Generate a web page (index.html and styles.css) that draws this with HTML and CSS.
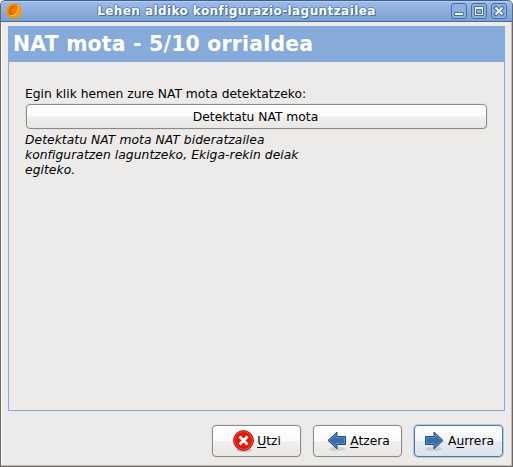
FILE: index.html
```html
<!DOCTYPE html>
<html lang="eu">
<head>
<meta charset="utf-8">
<title>Lehen aldiko konfigurazio-laguntzailea</title>
<link rel="stylesheet" href="styles.css">
</head>
<body>
<div class="window">
  <header class="titlebar">
    <svg class="logo" width="16" height="16" viewBox="0 0 16 16">
      <defs><linearGradient id="lg" x2="1" y2="1"><stop stop-color="#fb9a12"/><stop offset=".5" stop-color="#f08a0a"/><stop offset="1" stop-color="#f5a51c"/></linearGradient></defs>
      <circle cx="8" cy="8" r="7.800" fill="url(#lg)"/>
      <ellipse cx="7.200" cy="7.600" rx="4.600" ry="5.600" fill="#dd6404" transform="rotate(25 7 8)"/>
      <ellipse cx="8" cy="6.800" rx="3" ry="4.200" fill="#ea7c08" transform="rotate(25 7 8)"/>
      <path d="M3.500 12.500Q9 14 11.500 8.500T11 2.500" fill="none" stroke="#fbc02a" stroke-width="1.200"/>
    </svg>
    <h1 class="title"><span>Lehen aldiko konfigurazio-laguntzailea</span></h1>
    <div class="controls">
      <svg width="16" height="16" viewBox="0 0 16 16"><rect class="ctl" x=".5" y=".5" width="15" height="15" rx="2.500"/><path d="M3.500 9.500h9v3h-9z" fill="#fff" stroke="#456f9f"/></svg>
      <svg width="16" height="16" viewBox="0 0 16 16"><rect class="ctl" x=".5" y=".5" width="15" height="15" rx="2.500"/><path d="M3.500 3.500h9v9h-9z" fill="#eef4fb" stroke="#456f9f"/><path d="M5.500 6.500h5v4h-5z" fill="#8fb0dc" stroke="#456f9f"/></svg>
      <svg width="16" height="16" viewBox="0 0 16 16"><rect class="ctl" x=".5" y=".5" width="15" height="15" rx="2.500"/><path d="M5 5l6 6m0-6l-6 6" stroke="#456f9f" stroke-width="4" stroke-linecap="square"/><path d="M5.200 5.200l5.600 5.600m0-5.600l-5.600 5.600" stroke="#f4f8fd" stroke-width="2" stroke-linecap="square"/></svg>
    </div>
  </header>
  <main class="panel">
    <h2 class="heading">NAT mota - 5/10 orrialdea</h2>
    <div class="content">
      <p class="label">Egin klik hemen zure NAT mota detektatzeko:</p>
      <button class="button detect">Detektatu NAT mota</button>
      <p class="hint">Detektatu NAT mota NAT bideratzailea<br>konfiguratzen laguntzeko, Ekiga-rekin deiak<br>egiteko.</p>
    </div>
  </main>
  <footer class="actions">
    <button class="button">
      <svg width="24" height="24" viewBox="0 0 24 24"><ellipse cx="12" cy="21" rx="8" ry="2" fill="#000" opacity=".16"/><circle cx="11.500" cy="11.500" r="9.900" fill="#df1a0d" stroke="#b50f0b"/><circle cx="11.500" cy="11.500" r="8.900" fill="none" stroke="#f15a48" stroke-width=".8"/><path d="M7.500 7.500l8 8m0-8l-8 8" stroke="#fff" stroke-width="2.800"/></svg>
      <span><u>U</u>tzi</span>
    </button>
    <button class="button">
      <svg width="24" height="24" viewBox="0 0 24 24"><ellipse cx="12" cy="20" rx="8.500" ry="2" fill="#000" opacity=".1"/><path d="M3 11.500L12 3v4.500h8.500v8H12V20z" fill="#3a6cab" stroke="#204a87"/><path d="M4.500 11.500L11 5.300v3.200h8.500v6H11v3.200z" fill="none" stroke="#7299c8" stroke-width=".7"/></svg>
      <span><u>A</u>tzera</span>
    </button>
    <button class="button primary">
      <svg width="24" height="24" viewBox="0 0 24 24"><ellipse cx="11" cy="20" rx="8.500" ry="2" fill="#000" opacity=".1"/><path d="M20 11.500L11 3v4.500H2.500v8H11V20z" fill="#3a6cab" stroke="#204a87"/><path d="M18.500 11.500L12 5.300v3.200H3.500v6H12v3.200z" fill="none" stroke="#7299c8" stroke-width=".7"/></svg>
      <span>A<u>u</u>rrera</span>
    </button>
  </footer>
</div>
</body>
</html>
```

FILE: styles.css
```css
* { box-sizing: border-box; }
body { margin: 0; background: #fff; font: 12.3px/15px "DejaVu Sans", sans-serif; color: #000; }
h1, h2, p { margin: 0; }
.window { width: 513px; height: 467px; display: flex; flex-direction: column; background: #edebe9; border: 1px solid #6b6765; border-top: 0; border-radius: 5px 5px 0 0; overflow: hidden; box-shadow: inset -1px -1px #bdbab7, inset 1px 0 #fff; }
.titlebar { height: 22px; flex: none; margin: 0 -1px; padding: 0 6px; display: flex; align-items: center; background: linear-gradient(#9dbce8, #7ba0d0); border: 1px solid #456a9b; border-top-color: #3d5f8d; border-radius: 5px 5px 0 0; box-shadow: inset 0 1px #b6cdef; }
.logo { flex: none; margin-left: -1px; }
.title { flex: 1; text-align: center; font-size: 12px; line-height: 22px; letter-spacing: .42px; color: #fff; text-shadow: 1px 1px #486f9f, -1px 0 #587fb0, 0 -1px #6289ba, 1px 0 #587fb0; white-space: nowrap; }
.controls { display: flex; gap: 4px; margin-right: -1px; }
.ctl { fill: #8eb0df; stroke: #456f9f; }
.panel { height: 385px; flex: none; margin: 4px 7px 0; border: 1px solid #86aad9; }
.heading { height: 35px; padding-left: 4px; background: #86aad9; color: #fff; font-size: 20.4px; letter-spacing: .22px; line-height: 35px; white-space: nowrap; }
.content { padding: 25px 17px 0 16px; }
.label { height: 17px; line-height: 15px; white-space: nowrap; }
.button { width: 89px; height: 32px; padding: 0; display: flex; align-items: center; justify-content: center; gap: 1px; border: 1px solid #8d8985; border-radius: 4px; background: linear-gradient(#fff, #fafafa 49%, #f1f0ef 51%, #e8e7e5); color: #000; font: inherit; box-shadow: 0 0 0 1px #e4e2df; }
.detect { width: 461px; height: 25px; margin-left: 1px; padding: 2px 2px 0 0; }
.hint { margin-top: 4px; font-style: italic; letter-spacing: .06px; white-space: nowrap; }
.actions { display: flex; justify-content: flex-end; gap: 12px; padding: 14px 9px 0; }
.primary { border-color: #5278ab; background: linear-gradient(#fff, #f3f5f8 49%, #e7ebf0 51%, #dde2e9); box-shadow: 0 0 0 1px #b3c8e3; }
u { text-underline-offset: 2px; text-decoration-thickness: 1px; text-decoration-skip-ink: none; }
```
